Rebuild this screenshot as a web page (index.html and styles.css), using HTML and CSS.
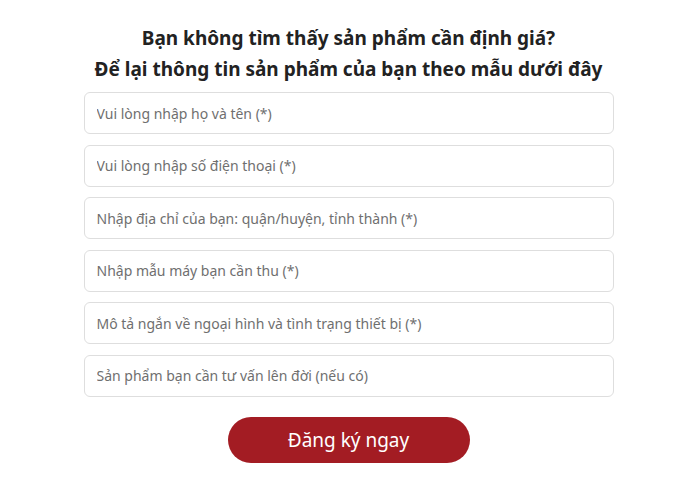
FILE: index.html
```html
<!DOCTYPE html>
<html lang="vi">
<head>
<meta charset="utf-8">
<link rel="stylesheet" href="styles.css">
</head>
<body>
<div class="wrap">
  <h2 class="title">Bạn không tìm thấy sản phẩm cần định giá?<br>Để lại thông tin sản phẩm của bạn theo mẫu dưới đây</h2>
  <form class="form">
    <input class="field" type="text" placeholder="Vui lòng nhập họ và tên (*)">
    <input class="field" type="text" placeholder="Vui lòng nhập số điện thoại (*)">
    <input class="field" type="text" placeholder="Nhập địa chỉ của bạn: quận/huyện, tỉnh thành (*)">
    <input class="field" type="text" placeholder="Nhập mẫu máy bạn cần thu (*)">
    <input class="field" type="text" placeholder="Mô tả ngắn về ngoại hình và tình trạng thiết bị (*)">
    <input class="field" type="text" placeholder="Sản phẩm bạn cần tư vấn lên đời (nếu có)">
    <button class="submit" type="button">Đăng ký ngay</button>
  </form>
</div>
</body>
</html>
```
FILE: styles.css
```css
html, body {
  margin: 0;
  padding: 0;
  background: #fff;
}
body {
  font-family: "Noto Sans", "Open Sans", sans-serif;
}
.wrap {
  width: 530px;
  margin: 0 auto;
  padding-top: 23px;
}
.title {
  margin: 0 0 7px;
  text-align: center;
  font-size: 19px;
  line-height: 31px;
  font-weight: 700;
  color: #222;
}
.form {
  display: flex;
  flex-direction: column;
  gap: 10.5px;
}
.field {
  box-sizing: border-box;
  width: 100%;
  height: 42px;
  border: 1px solid #dedede;
  border-radius: 6px;
  padding: 0 12px;
  font-family: inherit;
  font-size: 14px;
  color: #333;
  outline: none;
}
.field::placeholder {
  color: #6f6f6f;
}
.submit {
  align-self: center;
  margin-top: 10px;
  width: 242px;
  height: 46px;
  border: none;
  border-radius: 23px;
  background: #a31c23;
  color: #fff;
  font-family: inherit;
  font-size: 19px;
}
```
